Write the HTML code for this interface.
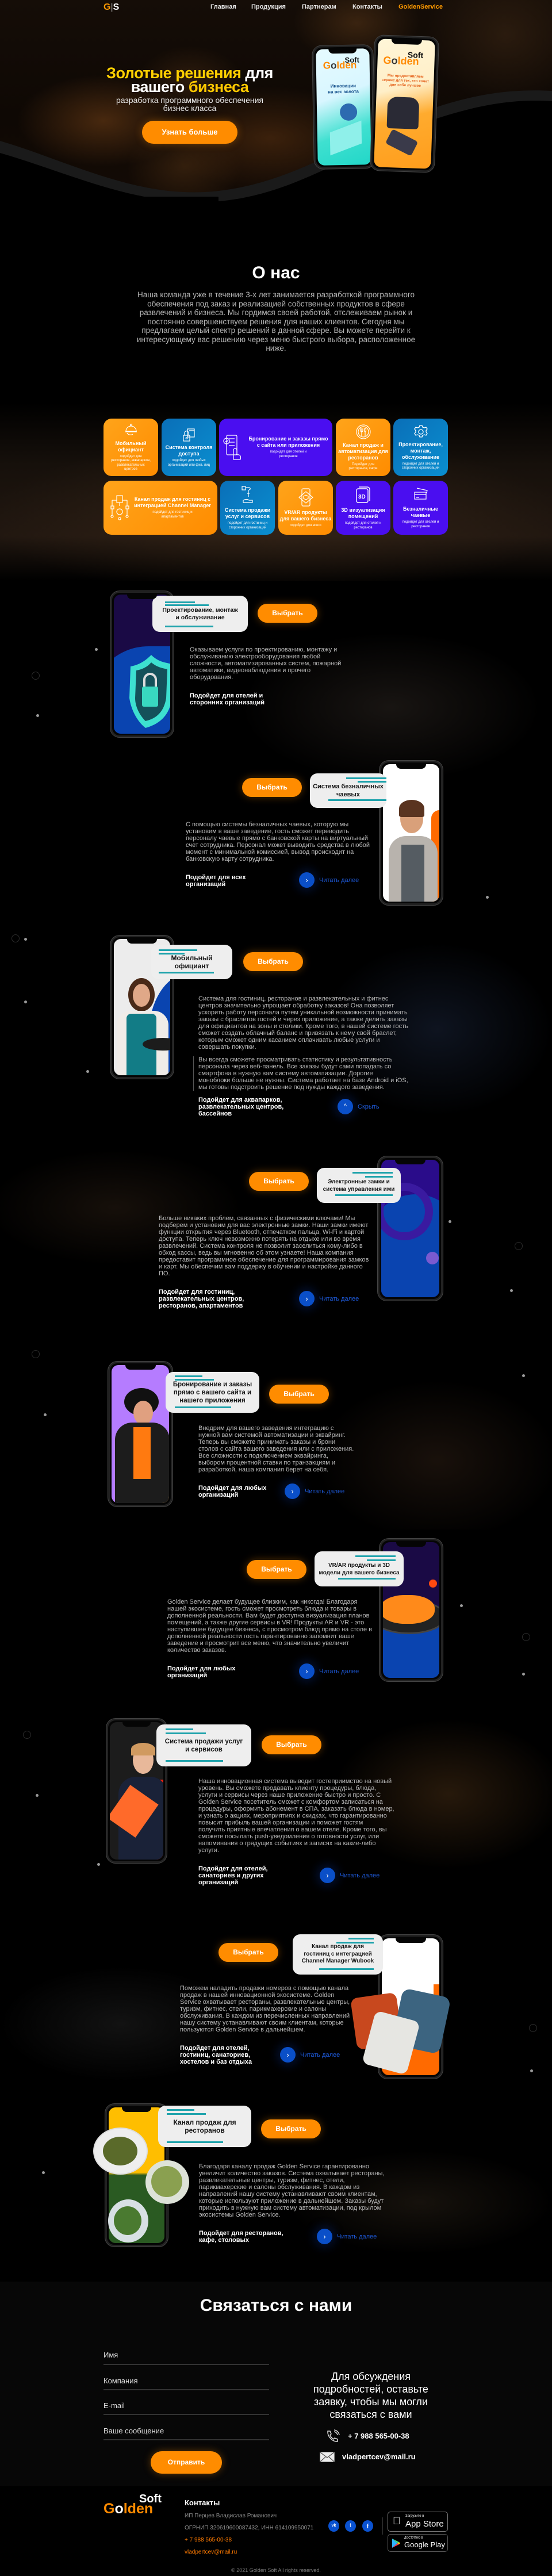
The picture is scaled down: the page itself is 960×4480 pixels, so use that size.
<!DOCTYPE html>
<html><head><meta charset="utf-8">
<style>
*{margin:0;padding:0;box-sizing:border-box}
body{width:960px;height:4480px;background:#000;font-family:"Liberation Sans",Arial,sans-serif;overflow:hidden}
#w{position:relative;width:960px;height:4480px;overflow:hidden;background:#000}
.a{position:absolute}
.nav{position:absolute;top:6px;font-size:11px;font-weight:bold;color:#e8e8e8}
.txt{position:absolute;font-size:11px;line-height:12px;color:#b9b9b9;white-space:nowrap}
.fit{position:absolute;font-size:11px;line-height:12px;color:#fff;font-weight:bold;white-space:nowrap}
.btn{position:absolute;width:104px;height:33px;border-radius:17px;background:#ff8c00;color:#fff;font-weight:bold;font-size:12px;line-height:33px;text-align:center;box-shadow:0 0 14px rgba(255,140,0,.35)}
.bub{position:absolute;background:#eeeeee;border-radius:13px;color:#151515;font-weight:bold;font-size:10.5px;line-height:13px;text-align:center;display:flex;align-items:center;justify-content:center;flex-direction:column;white-space:nowrap}
.bub .l1,.bub .l2,.bub .l3{position:absolute;height:3px;background:#1fa3ac}
.more{position:absolute;width:27px;height:27px;border-radius:50%;background:#0a4fc8;box-shadow:0 0 16px 6px rgba(10,60,180,.25);color:#fff;font-size:13px;line-height:27px;text-align:center}
.mt{position:absolute;color:#1d58d6;font-size:11px;white-space:nowrap}
.ph{position:absolute;border:3px solid #222;border-radius:16px;background:#050505;box-shadow:0 0 0 1px #444}
.scr{position:absolute;left:3px;top:3px;right:3px;bottom:3px;border-radius:12px;overflow:hidden}
.notch{position:absolute;left:50%;top:0;width:50%;height:11px;margin-left:-25%;background:#050505;border-radius:0 0 8px 8px;z-index:3}
.tile{position:absolute;border-radius:14px;color:#fff;text-align:center;display:flex;flex-direction:column;align-items:center;justify-content:center;padding:3px;white-space:nowrap}
.tile b{font-size:9px;line-height:11px;display:block}
.tile i{font-style:normal;font-size:6px;line-height:7.5px;display:block;margin-top:3px;color:#fff}
.o{background:linear-gradient(135deg,#ffa41a,#ff8c00)}
.bl{background:linear-gradient(135deg,#0a6fb8,#0a8fd0)}
.pu{background:#4a0ef0}
.dot{position:absolute;width:5px;height:5px;border-radius:50%;background:#9a9a9a}
.ring{position:absolute;width:14px;height:14px;border-radius:50%;border:1px solid #2a2a2a}
.lbl{position:absolute;left:180px;color:#ddd;font-size:13px}
.ul{position:absolute;left:180px;width:288px;height:2px;background:#333}
</style></head><body><div id="w">

<!-- HERO -->
<div class="a" style="left:0;top:0;width:960px;height:345px;background:
radial-gradient(ellipse 150px 80px at 180px 210px,rgba(110,62,22,.6),transparent),
radial-gradient(ellipse 190px 90px at 470px 240px,rgba(95,52,18,.55),transparent),
radial-gradient(ellipse 110px 70px at 620px 40px,rgba(95,58,25,.5),transparent),
radial-gradient(ellipse 90px 60px at 330px 140px,rgba(75,45,20,.5),transparent),
radial-gradient(ellipse 140px 120px at 880px 60px,rgba(65,42,22,.5),transparent),
radial-gradient(ellipse 100px 70px at 320px 290px,rgba(90,55,22,.45),transparent),
linear-gradient(180deg,#150d07,#0e0804 60%,#140b05)"></div>
<svg class="a" style="left:0;top:150px" width="960" height="220" viewBox="0 150 960 220">
<path d="M0 258 C120 290 240 360 380 345 C520 330 620 250 760 200 C840 172 900 165 960 170 L960 370 L0 370 Z" fill="#000"/>
<path d="M0 245 C120 280 240 348 380 332 C520 316 620 236 760 186 C840 160 900 155 960 158 L960 176 C900 172 840 180 760 206 C620 256 520 338 380 350 C240 362 120 300 0 266 Z" fill="#1a1a1a"/>
</svg>
<div class="a" style="left:0;top:342px;width:380px;height:30px;background:#000"></div>

<div class="a" style="left:180px;top:4px;font-weight:bold;font-size:16px;line-height:18px;color:#ff9800">G<span style="color:#aaa;font-weight:normal">|</span><span style="color:#fff">S</span></div>
<div class="nav" style="left:366px">Главная</div>
<div class="nav" style="left:437px">Продукция</div>
<div class="nav" style="left:525px">Партнерам</div>
<div class="nav" style="left:613px">Контакты</div>
<div class="nav" style="left:693px;color:#ff9a00">GoldenService</div>

<div class="a" style="left:150px;top:115px;width:360px;text-align:center;font-size:27px;line-height:24px;font-weight:bold;color:#fff;letter-spacing:-.5px"><span style="color:#ffd000">Золотые решения</span> для<br>вашего <span style="color:#ffc800">бизнеса</span></div>
<div class="a" style="left:150px;top:167px;width:360px;text-align:center;font-size:14px;line-height:14px;color:#eee">разработка программного обеспечения<br>бизнес класса</div>
<div class="btn" style="left:247px;top:210px;width:166px;height:40px;border-radius:20px;line-height:40px;font-size:13px">Узнать больше</div>

<div class="ph" style="left:545px;top:79px;width:105px;height:214px;transform:rotate(-1deg)"><div class="notch"></div><div class="scr" style="background:linear-gradient(160deg,#e6fbff 0%,#d8f6ff 40%,#3fe0d0 70%,#22d7c8)">
<div class="a" style="left:12px;top:22px;font-weight:bold;font-size:17px;line-height:13px;color:#ff8a00">G<span style="color:#333">o</span>lden</div>
<div class="a" style="left:50px;top:12px;font-weight:bold;font-size:13px;color:#111">Soft</div>
<div class="a" style="left:0;width:100%;top:60px;text-align:center;font-weight:bold;font-size:8px;line-height:10px;color:#124e8a">Инновации<br>на вес золота</div>
<div class="a" style="left:40px;top:95px;width:30px;height:30px;border-radius:50%;background:#2d6bb0"></div>
<div class="a" style="left:22px;top:135px;width:55px;height:40px;background:#8ff0ea;transform:skewY(-20deg)"></div>
</div></div>
<div class="ph" style="left:648px;top:63px;width:111px;height:235px;transform:rotate(2deg)"><div class="notch"></div><div class="scr" style="background:linear-gradient(165deg,#fff6d8 0%,#ffefc8 38%,#ffab2e 60%,#ff9d1c)">
<div class="a" style="left:10px;top:30px;font-weight:bold;font-size:18px;line-height:14px;color:#ff8a00">G<span style="color:#333">o</span>lden</div>
<div class="a" style="left:52px;top:18px;font-weight:bold;font-size:14px;color:#111">Soft</div>
<div class="a" style="left:0;width:100%;top:60px;text-align:center;font-weight:bold;font-size:6.5px;line-height:8px;color:#e5611a">Мы предоставляем<br>сервис для тех, кто хочет<br>для себя лучшее</div>
<div class="a" style="left:20px;top:100px;width:55px;height:55px;background:#2a2a35;border-radius:30% 30% 10% 10%"></div>
<div class="a" style="left:22px;top:165px;width:50px;height:28px;background:#3a3a4a;border-radius:5px;transform:rotate(25deg)"></div>
</div></div>

<!-- ABOUT -->
<div class="a" style="left:0;top:458px;width:960px;text-align:center;font-size:30px;font-weight:bold;color:#fff">О нас</div>
<div class="a" style="left:0;top:505px;width:960px;text-align:center;font-size:13.5px;line-height:15.5px;color:#b5b5b5;white-space:nowrap">Наша команда уже в течение 3-х лет занимается разработкой программного<br>обеспечения под заказ и реализацией собственных продуктов в сфере<br>развлечений и бизнеса. Мы гордимся своей работой, отслеживаем рынок и<br>постоянно совершенствуем решения для наших клиентов. Сегодня мы<br>предлагаем целый спектр решений в данной сфере. Вы можете перейти к<br>интересующему вас решению через меню быстрого выбора, расположенное<br>ниже.</div>

<!-- tiles bg -->
<div class="a" style="left:0;top:700px;width:960px;height:310px;background:radial-gradient(ellipse 500px 140px at 480px 200px,rgba(70,48,30,.5),transparent),linear-gradient(180deg,#000,#16100b 35%,#211710 75%,#000)"></div>

<div class="tile o" style="left:180px;top:728px;width:95px;height:100px"><svg width="26" height="26" viewBox="0 0 26 26" fill="none" stroke="#fff" stroke-width="1.2"><circle cx="13" cy="3" r="1.5"/><path d="M4 14a9 9 0 0 1 18 0zM3 15h20M6 17c2 4 8 4 10 2"/></svg><b style="margin-top:4px">Мобильный<br>официант</b><i>подойдет для<br>ресторанов, аквапарков,<br>развлекательных<br>центров</i></div>
<div class="tile bl" style="left:281px;top:728px;width:95px;height:100px"><svg width="26" height="26" viewBox="0 0 26 26" fill="none" stroke="#fff" stroke-width="1.2"><path d="M10 3h12v14H10zM13 6h9M3 14h11v10H3zM5 14v-4a3.5 3.5 0 0 1 7 0v4"/><circle cx="8.5" cy="19" r="1.3"/></svg><b style="margin-top:4px">Система контроля<br>доступа</b><i>подойдет для любых<br>организаций или физ. лиц</i></div>
<div class="tile pu" style="left:381px;top:728px;width:197px;height:100px;flex-direction:row"><svg width="36" height="50" viewBox="0 0 36 50" fill="none" stroke="#fff" stroke-width="1.2"><rect x="6" y="4" width="18" height="34" rx="2"/><circle cx="6" cy="14" r="5"/><path d="M4 14l2 2 3-4M10 10h10M10 16h10M10 22h10M18 30c0-4 6-4 6 0v8c4-1 8 1 6 8H18z"/></svg><div style="margin-left:8px"><b>Бронирование и заказы прямо<br>с сайта или приложения</b><i>подойдет для отелей и<br>ресторанов</i></div></div>
<div class="tile o" style="left:584px;top:728px;width:95px;height:100px"><svg width="28" height="28" viewBox="0 0 28 28" fill="none" stroke="#fff" stroke-width="1.2"><circle cx="14" cy="14" r="12"/><circle cx="14" cy="14" r="9"/><path d="M11 8v5M9 8v4a2 2 0 0 0 4 0V8M11 13v8M17 8c-2 0-2 6 0 6s2-6 0-6zM17 14v7"/></svg><b style="margin-top:4px">Канал продаж и<br>автоматизация для<br>ресторанов</b><i>Подойдет для<br>ресторанов, кафе</i></div>
<div class="tile bl" style="left:684px;top:728px;width:95px;height:100px"><svg width="26" height="26" viewBox="0 0 26 26" fill="none" stroke="#fff" stroke-width="1.3"><circle cx="13" cy="13" r="4"/><path d="M11 2h4l1 3 3 1 3-1 2 3-2 3v2l2 3-2 3-3-1-3 1-1 3h-4l-1-3-3-1-3 1-2-3 2-3v-2L2 8l2-3 3 1 3-1z"/></svg><b style="margin-top:4px">Проектирование,<br>монтаж,<br>обслуживание</b><i>подойдет для отелей и<br>сторонних организаций</i></div>

<div class="tile o" style="left:180px;top:836px;width:198px;height:94px;flex-direction:row"><svg width="36" height="50" viewBox="0 0 36 50" fill="none" stroke="#fff" stroke-width="1.2"><rect x="12" y="4" width="10" height="12"/><path d="M17 16v6M4 12h8M22 12h8M4 12v10M30 12v10M2 22h5v5H2zM28 22h5v5h-5zM4 27v10M30 27v10"/><circle cx="17" cy="32" r="5"/><circle cx="4" cy="40" r="2"/><circle cx="30" cy="40" r="2"/><circle cx="17" cy="44" r="2"/></svg><div style="margin-left:6px"><b>Канал продаж для гостиниц с<br>интеграцией Channel Manager</b><i>подойдет для гостиниц и<br>апартаментов</i></div></div>
<div class="tile bl" style="left:383px;top:836px;width:95px;height:94px"><svg width="26" height="34" viewBox="0 0 26 34" fill="none" stroke="#fff" stroke-width="1.2"><path d="M3 2h6v6H3zM9 4h6c3 0 3 4 0 4M14 8v12M12 14h4M5 26c4-2 8-2 10 0h6v4H5z"/></svg><b style="margin-top:4px">Система продажи<br>услуг и сервисов</b><i>подойдет для гостиниц и<br>сторонних организаций</i></div>
<div class="tile o" style="left:484px;top:836px;width:95px;height:94px"><svg width="28" height="34" viewBox="0 0 28 34" fill="none" stroke="#fff" stroke-width="1.2"><rect x="7" y="2" width="14" height="30" rx="2"/><path d="M2 17l12-10 12 10-12 10z"/><path d="M10 15l4-2 4 2v4l-4 2-4-2z"/></svg><b style="margin-top:4px">VR/AR продукты<br>для вашего бизнеса</b><i>подойдет для всего</i></div>
<div class="tile pu" style="left:584px;top:836px;width:95px;height:94px"><svg width="28" height="34" viewBox="0 0 28 34" fill="none" stroke="#fff" stroke-width="1.4"><rect x="2" y="6" width="20" height="24" rx="3"/><path d="M6 3h15a4 4 0 0 1 4 4v20"/><text x="5" y="23" font-size="10" fill="#fff" stroke="none" font-family="Liberation Sans" font-weight="bold">3D</text></svg><b style="margin-top:4px">3D визуализация<br>помещений</b><i>подойдет для отелей и<br>ресторанов</i></div>
<div class="tile pu" style="left:684px;top:836px;width:95px;height:94px"><svg width="30" height="30" viewBox="0 0 30 30" fill="none" stroke="#fff" stroke-width="1.2"><path d="M8 3l18 4-1 4M4 10h20v12H4zM4 14h20M7 19h5"/></svg><b style="margin-top:4px">Безналичные<br>чаевые</b><i>подойдет для отелей и<br>ресторанов</i></div>

<!-- faint section backgrounds -->
<div class="a" style="left:420px;top:1100px;width:520px;height:260px;background:radial-gradient(ellipse 260px 130px at 260px 130px,rgba(40,34,30,.6),transparent)"></div>
<div class="a" style="left:560px;top:1640px;width:400px;height:300px;background:radial-gradient(ellipse 200px 150px at 200px 150px,rgba(20,28,45,.7),transparent)"></div>
<div class="a" style="left:0;top:2000px;width:450px;height:200px;background:radial-gradient(ellipse 220px 100px at 200px 100px,rgba(40,28,18,.55),transparent)"></div>
<div class="a" style="left:540px;top:2380px;width:420px;height:280px;background:radial-gradient(ellipse 210px 140px at 220px 160px,rgba(45,30,20,.55),transparent)"></div>
<div class="a" style="left:560px;top:2990px;width:400px;height:260px;background:radial-gradient(ellipse 200px 130px at 220px 130px,rgba(70,45,20,.55),transparent)"></div>
<div class="a" style="left:0;top:3420px;width:420px;height:200px;background:radial-gradient(ellipse 210px 100px at 210px 100px,rgba(30,30,30,.6),transparent)"></div>
<div class="a" style="left:500px;top:3740px;width:460px;height:180px;background:radial-gradient(ellipse 230px 90px at 230px 90px,rgba(40,32,22,.55),transparent)"></div>

<!-- dots -->
<div class="dot" style="left:165px;top:1127px"></div><div class="dot" style="left:63px;top:1242px"></div><div class="dot" style="left:845px;top:1558px"></div><div class="dot" style="left:42px;top:1631px"></div><div class="dot" style="left:42px;top:1740px"></div><div class="dot" style="left:150px;top:1861px"></div><div class="dot" style="left:780px;top:2122px"></div><div class="dot" style="left:887px;top:2242px"></div><div class="dot" style="left:76px;top:2458px"></div><div class="dot" style="left:908px;top:2390px"></div><div class="dot" style="left:800px;top:2790px"></div><div class="dot" style="left:908px;top:2909px"></div><div class="dot" style="left:62px;top:3120px"></div><div class="dot" style="left:169px;top:3240px"></div><div class="dot" style="left:922px;top:3599px"></div><div class="dot" style="left:73px;top:3776px"></div>
<div class="ring" style="left:55px;top:1168px"></div><div class="ring" style="left:20px;top:1625px"></div><div class="ring" style="left:895px;top:2160px"></div><div class="ring" style="left:55px;top:2348px"></div><div class="ring" style="left:908px;top:2840px"></div><div class="ring" style="left:40px;top:3010px"></div><div class="ring" style="left:920px;top:3520px"></div>

<!-- S1 -->
<div class="ph" style="left:192px;top:1028px;width:110px;height:254px"><div class="notch"></div><div class="scr" style="background:#1a0a45">
<div class="a" style="left:-40px;top:90px;width:200px;height:200px;border-radius:50% 0 0 0;background:#0a44b0"></div>
<svg class="a" style="left:25px;top:100px" width="80" height="135" viewBox="0 0 80 135"><path d="M40 5 C55 20 70 18 78 22 L76 80 C72 110 55 125 30 132 C15 120 5 100 2 80 L4 25 C20 22 30 15 40 5Z" fill="#3de0d0"/><path d="M40 18 C52 28 62 28 68 30 L66 80 C62 105 48 116 30 120 C20 110 12 95 12 80 L14 32 C26 30 34 25 40 18Z" fill="#14515a"/><rect x="24" y="60" width="28" height="35" rx="3" fill="#38d8c0"/><path d="M28 60v-12a10 10 0 0 1 20 0v12" fill="none" stroke="#ddd" stroke-width="4"/></svg>
</div></div>
<div class="bub" style="left:265px;top:1036px;width:166px;height:63px">Проектирование, монтаж<br>и обслуживание<span class="l1" style="left:22px;top:10px;width:52px"></span><span class="l2" style="left:22px;top:15px;width:76px"></span><span class="l3" style="left:22px;top:52px;width:84px"></span></div>
<div class="btn" style="left:448px;top:1050px">Выбрать</div>
<div class="txt" style="left:330px;top:1124px">Оказываем услуги по проектированию, монтажу и<br>обслуживанию электрооборудования любой<br>сложности, автоматизированных систем, пожарной<br>автоматики, видеонаблюдения и прочего<br>оборудования.</div>
<div class="fit" style="left:330px;top:1204px">Подойдет для отелей и<br>сторонних организаций</div>

<!-- S2 -->
<div class="ph" style="left:660px;top:1323px;width:110px;height:251px"><div class="notch"></div><div class="scr" style="background:#fff">
<div class="a" style="right:0;top:80px;width:14px;height:160px;background:#ff6a00;border-radius:14px 0 0 0"></div>
<div class="a" style="left:30px;top:70px;width:40px;height:50px;border-radius:50%;background:#d9a07a"></div>
<div class="a" style="left:28px;top:62px;width:44px;height:30px;border-radius:50% 50% 10% 10%;background:#5a3420"></div>
<div class="a" style="left:10px;top:125px;width:85px;height:130px;border-radius:30px 30px 0 0;background:#b8b3ad"></div>
<div class="a" style="left:32px;top:140px;width:40px;height:110px;background:#555c62"></div>
</div></div>
<div class="bub" style="left:539px;top:1345px;width:133px;height:60px;font-size:11px;line-height:14px">Система безналичных<br>чаевых<span class="l1" style="left:63px;top:7px;width:70px"></span><span class="l2" style="left:83px;top:13px;width:50px"></span><span class="l3" style="left:32px;top:45px;width:101px"></span></div>
<div class="btn" style="left:421px;top:1353px">Выбрать</div>
<div class="txt" style="left:323px;top:1428px">С помощью системы безналичных чаевых, которую мы<br>установим в ваше заведение, гость сможет переводить<br>персоналу чаевые прямо с банковской карты на виртуальный<br>счет сотрудника. Персонал может выводить средства в любой<br>момент с минимальной комиссией, вывод происходит на<br>банковскую карту сотрудника.</div>
<div class="fit" style="left:323px;top:1520px">Подойдет для всех<br>организаций</div>
<div class="more" style="left:520px;top:1517px">›</div><div class="mt" style="left:555px;top:1525px">Читать далее</div>

<!-- S3 -->
<div class="ph" style="left:192px;top:1627px;width:110px;height:249px"><div class="notch"></div><div class="scr" style="background:#ececec">
<div class="a" style="left:60px;top:60px;width:140px;height:220px;border-radius:50%;background:#0a44b0"></div>
<div class="a" style="left:25px;top:68px;width:46px;height:58px;border-radius:50%;background:#4a2a18"></div>
<div class="a" style="left:33px;top:78px;width:30px;height:40px;border-radius:50%;background:#e0a888"></div>
<div class="a" style="left:5px;top:125px;width:90px;height:130px;border-radius:25px 25px 0 0;background:#f0ece8"></div>
<div class="a" style="left:22px;top:130px;width:52px;height:120px;border-radius:8px 8px 0 0;background:#127c86"></div>
<div class="a" style="left:50px;top:172px;width:70px;height:22px;border-radius:50%;background:#1c1c1c"></div>
</div></div>
<div class="bub" style="left:263px;top:1643px;width:141px;height:60px;font-size:12px;line-height:14px">Мобильный<br>официант<span class="l1" style="left:13px;top:8px;width:67px"></span><span class="l2" style="left:13px;top:14px;width:45px"></span><span class="l3" style="left:13px;top:47px;width:96px"></span></div>
<div class="btn" style="left:423px;top:1656px">Выбрать</div>
<div class="txt" style="left:345px;top:1731px">Система для гостиниц, ресторанов и развлекательных и фитнес<br>центров значительно упрощает обработку заказов! Она позволяет<br>ускорить работу персонала путем уникальной возможности принимать<br>заказы с браслетов гостей и через приложение, а также делить заказы<br>для официантов на зоны и столики. Кроме того, в нашей системе гость<br>сможет создать облачный баланс и привязать к нему свой браслет,<br>которым сможет одним касанием оплачивать любые услуги и<br>совершать покупки.</div>
<div class="a" style="left:336px;top:1837px;width:1px;height:60px;background:#555"></div>
<div class="txt" style="left:345px;top:1837px">Вы всегда сможете просматривать статистику и результативность<br>персонала через веб-панель. Все заказы будут сами попадать со<br>смартфона в нужную вам систему автоматизации. Дорогие<br>моноблоки больше не нужны. Система работает на базе Android и iOS,<br>мы готовы подстроить решение под нужды каждого заведения.</div>
<div class="fit" style="left:345px;top:1907px">Подойдет для аквапарков,<br>развлекательных центров,<br>бассейнов</div>
<div class="more" style="left:587px;top:1911px;font-size:11px">^</div><div class="mt" style="left:622px;top:1919px">Скрыть</div>

<!-- S4 -->
<div class="ph" style="left:657px;top:2011px;width:113px;height:251px"><div class="notch"></div><div class="scr" style="background:#2a0c8a">
<div class="a" style="left:-30px;top:60px;width:180px;height:200px;border-radius:50%;background:#0a44b0"></div>
<div class="a" style="left:-10px;top:40px;width:100px;height:100px;border-radius:50%;border:14px solid #3a1aa0"></div>
<div class="a" style="left:78px;top:160px;width:22px;height:22px;border-radius:50%;background:#7a5ad0"></div>
</div></div>
<div class="bub" style="left:551px;top:2031px;width:146px;height:61px;font-size:10px;line-height:13px">Электронные замки и<br>система управления ими<span class="l1" style="left:62px;top:7px;width:70px"></span><span class="l2" style="left:84px;top:14px;width:48px"></span><span class="l3" style="left:32px;top:46px;width:100px"></span></div>
<div class="btn" style="left:433px;top:2038px">Выбрать</div>
<div class="txt" style="left:276px;top:2113px">Больше никаких проблем, связанных с физическими ключами! Мы<br>подберем и установим для вас электронные замки. Наши замки имеют<br>функции открытия через Bluetooth, отпечатком пальца, Wi-Fi и картой<br>доступа. Теперь ключ невозможно потерять на отдыхе или во время<br>развлечений. Система контроля не позволит заселиться кому-либо в<br>обход кассы, ведь вы мгновенно об этом узнаете! Наша компания<br>предоставит программное обеспечение для программирования замков<br>и карт. Мы обеспечим вам поддержу в обучении и настройке данного<br>ПО.</div>
<div class="fit" style="left:276px;top:2241px">Подойдет для гостиниц,<br>развлекательных центров,<br>ресторанов, апартаментов</div>
<div class="more" style="left:520px;top:2245px">›</div><div class="mt" style="left:555px;top:2253px">Читать далее</div>

<!-- S5 -->
<div class="ph" style="left:188px;top:2368px;width:112px;height:252px"><div class="notch"></div><div class="scr" style="background:#b57cff">
<div class="a" style="left:80px;top:140px;width:30px;height:110px;background:#ffbe00"></div>
<div class="a" style="left:22px;top:40px;width:60px;height:48px;border-radius:50%;background:#111"></div>
<div class="a" style="left:38px;top:62px;width:34px;height:42px;border-radius:50%;background:#e0a080"></div>
<div class="a" style="left:6px;top:100px;width:95px;height:150px;border-radius:30px 30px 0 0;background:#1c1c1c"></div>
<div class="a" style="left:38px;top:108px;width:30px;height:90px;background:#ff7a10"></div>
</div></div>
<div class="bub" style="left:288px;top:2386px;width:163px;height:71px;font-size:11.5px;line-height:14px">Бронирование и заказы<br>прямо с вашего сайта и<br>нашего приложения<span class="l1" style="left:16px;top:6px;width:48px"></span><span class="l2" style="left:16px;top:12px;width:68px"></span><span class="l3" style="left:16px;top:60px;width:98px"></span></div>
<div class="btn" style="left:468px;top:2408px">Выбрать</div>
<div class="txt" style="left:345px;top:2478px">Внедрим для вашего заведения интеграцию с<br>нужной вам системой автоматизации и эквайринг.<br>Теперь вы сможете принимать заказы и брони<br>столов с сайта вашего заведения или с приложения.<br>Все сложности с подключением эквайринга,<br>выбором процентной ставки по транзакциям и<br>разработкой, наша компания берет на себя.</div>
<div class="fit" style="left:345px;top:2582px">Подойдет для любых<br>организаций</div>
<div class="more" style="left:495px;top:2580px">›</div><div class="mt" style="left:530px;top:2588px">Читать далее</div>

<!-- S6 -->
<div class="ph" style="left:660px;top:2676px;width:110px;height:248px"><div class="notch"></div><div class="scr" style="background:linear-gradient(180deg,#1a0a45 0%,#1a0a45 45%,#0a44b0 65%,#0a44b0)">
<div class="a" style="left:-20px;top:100px;width:130px;height:60px;border-radius:50%;background:#222;border:3px solid #444"></div>
<div class="a" style="left:-5px;top:92px;width:95px;height:50px;border-radius:45%;background:#ff8a1a"></div>
<div class="a" style="left:80px;top:65px;width:14px;height:14px;border-radius:50%;background:#ff4a10"></div>
</div></div>
<div class="bub" style="left:547px;top:2698px;width:155px;height:61px;font-size:10px;line-height:13px">VR/AR продукты и 3D<br>модели для вашего бизнеса<span class="l1" style="left:71px;top:7px;width:70px"></span><span class="l2" style="left:91px;top:14px;width:50px"></span><span class="l3" style="left:41px;top:46px;width:100px"></span></div>
<div class="btn" style="left:429px;top:2713px">Выбрать</div>
<div class="txt" style="left:291px;top:2780px">Golden Service делает будущее близким, как никогда! Благодаря<br>нашей экосистеме, гость сможет просмотреть блюда и товары в<br>дополненной реальности. Вам будет доступна визуализация планов<br>помещений, а также другие сервисы в VR! Продукты AR и VR - это<br>наступившее будущее бизнеса, с просмотром блюд прямо на столе в<br>дополненной реальности гость гарантированно запомнит ваше<br>заведение и просмотрит все меню, что значительно увеличит<br>количество заказов.</div>
<div class="fit" style="left:291px;top:2896px">Подойдет для любых<br>организаций</div>
<div class="more" style="left:520px;top:2893px">›</div><div class="mt" style="left:555px;top:2901px">Читать далее</div>

<!-- S7 -->
<div class="ph" style="left:185px;top:2989px;width:105px;height:251px"><div class="notch"></div><div class="scr" style="background:#1c1c1c">
<div class="a" style="right:0;top:100px;width:14px;height:150px;background:#e82010"></div>
<div class="a" style="left:40px;top:42px;width:36px;height:48px;border-radius:50%;background:#e8b89a"></div>
<div class="a" style="left:37px;top:36px;width:42px;height:22px;border-radius:50% 50% 0 0;background:#d09a60"></div>
<div class="a" style="left:15px;top:95px;width:85px;height:160px;border-radius:30px 30px 0 0;background:#1a2238"></div>
<div class="a" style="left:10px;top:120px;width:60px;height:70px;background:#ff6a2a;transform:rotate(35deg)"></div>
</div></div>
<div class="bub" style="left:272px;top:2999px;width:165px;height:73px;font-size:11.5px;line-height:14px">Система продажи услуг<br>и сервисов<span class="l1" style="left:16px;top:7px;width:48px"></span><span class="l2" style="left:16px;top:14px;width:70px"></span><span class="l3" style="left:16px;top:62px;width:100px"></span></div>
<div class="btn" style="left:455px;top:3018px">Выбрать</div>
<div class="txt" style="left:345px;top:3092px">Наша инновационная система выводит гостеприимство на новый<br>уровень. Вы сможете продавать клиенту процедуры, блюда,<br>услуги и сервисы через наше приложение быстро и просто. С<br>Golden Service посетитель сможет с комфортом записаться на<br>процедуры, оформить абонемент в СПА, заказать блюда в номер,<br>и узнать о акциях, мероприятиях и скидках, что гарантированно<br>повысит прибыль вашей организации и поможет гостям<br>получить приятные впечатления о вашем отеле. Кроме того, вы<br>сможете посылать push-уведомления о готовности услуг, или<br>напоминания о грядущих событиях и записях на какие-либо<br>услуги.</div>
<div class="fit" style="left:345px;top:3244px">Подойдет для отелей,<br>санаториев и других<br>организаций</div>
<div class="more" style="left:556px;top:3248px">›</div><div class="mt" style="left:591px;top:3256px">Читать далее</div>

<!-- S8 -->
<div class="ph" style="left:658px;top:3365px;width:112px;height:250px"><div class="notch"></div><div class="scr" style="background:linear-gradient(180deg,#fff 0%,#fff 70%,#ff6a00 72%)">
<div class="a" style="right:0;top:80px;width:10px;height:160px;background:#ff6a00"></div>
</div></div>
<div class="a" style="left:615px;top:3470px;width:80px;height:90px;background:#c8481e;border-radius:12px;transform:rotate(-8deg)"></div>
<div class="a" style="left:690px;top:3465px;width:85px;height:100px;background:#3c6480;border-radius:14px;transform:rotate(12deg)"></div>
<div class="a" style="left:640px;top:3505px;width:80px;height:95px;background:#e6e6e2;border-radius:12px;transform:rotate(15deg)"></div>
<div class="bub" style="left:509px;top:3364px;width:157px;height:70px;font-size:10px;line-height:12.5px">Канал продаж для<br>гостиниц с интеграцией<br>Channel Manager Wubook<span class="l1" style="left:97px;top:6px;width:44px"></span><span class="l2" style="left:76px;top:13px;width:65px"></span><span class="l3" style="left:46px;top:59px;width:95px"></span></div>
<div class="btn" style="left:380px;top:3379px">Выбрать</div>
<div class="txt" style="left:313px;top:3452px">Поможем наладить продажи номеров с помощью канала<br>продаж в нашей инновационной экосистеме. Golden<br>Service охватывает рестораны, развлекательные центры,<br>туризм, фитнес, отели, парикмахерские и салоны<br>обслуживания. В каждом из перечисленных направлений<br>нашу систему устанавливают своим клиентам, которые<br>пользуются Golden Service в дальнейшем.</div>
<div class="fit" style="left:313px;top:3556px">Подойдет для отелей,<br>гостиниц, санаториев,<br>хостелов и баз отдыха</div>
<div class="more" style="left:487px;top:3560px">›</div><div class="mt" style="left:522px;top:3568px">Читать далее</div>

<!-- S9 -->
<div class="ph" style="left:183px;top:3659px;width:109px;height:248px"><div class="notch"></div><div class="scr" style="background:linear-gradient(180deg,#ffbe00 0%,#ffbe00 48%,#2a5a22 50%)"></div></div>
<div class="a" style="left:162px;top:3700px;width:95px;height:82px;border-radius:50%;background:#eee;border:2px solid #ddd"><div class="a" style="left:15px;top:14px;width:60px;height:50px;border-radius:50%;background:#5a6a2a"></div></div>
<div class="a" style="left:253px;top:3757px;width:76px;height:76px;border-radius:50%;background:#dde2d8"><div class="a" style="left:10px;top:10px;width:54px;height:54px;border-radius:50%;background:#8aa050"></div></div>
<div class="a" style="left:188px;top:3825px;width:70px;height:75px;border-radius:50%;background:#d8e0e4"><div class="a" style="left:10px;top:12px;width:48px;height:50px;border-radius:50%;background:#4a7a30"></div></div>
<div class="bub" style="left:275px;top:3662px;width:162px;height:72px;font-size:12px;line-height:14px">Канал продаж для<br>ресторанов<span class="l1" style="left:15px;top:6px;width:48px"></span><span class="l2" style="left:15px;top:13px;width:68px"></span><span class="l3" style="left:15px;top:62px;width:98px"></span></div>
<div class="btn" style="left:454px;top:3686px">Выбрать</div>
<div class="txt" style="left:346px;top:3762px">Благодаря каналу продаж Golden Service гарантированно<br>увеличит количество заказов. Система охватывает рестораны,<br>развлекательные центры, туризм, фитнес, отели,<br>парикмахерские и салоны обслуживания. В каждом из<br>направлений нашу систему устанавливают своим клиентам,<br>которые используют приложение в дальнейшем. Заказы будут<br>приходить в нужную вам систему автоматизации, под крылом<br>экосистемы Golden Service.</div>
<div class="fit" style="left:346px;top:3878px">Подойдет для ресторанов,<br>кафе, столовых</div>
<div class="more" style="left:551px;top:3876px">›</div><div class="mt" style="left:586px;top:3884px">Читать далее</div>

<!-- CONTACT -->
<div class="a" style="left:0;top:3968px;width:960px;height:355px;background:#070707"></div>
<div class="a" style="left:0;top:3993px;width:960px;text-align:center;font-size:30px;font-weight:bold;color:#fff">Связаться с нами</div>
<div class="lbl" style="top:4088px">Имя</div><div class="ul" style="top:4111px"></div>
<div class="lbl" style="top:4133px">Компания</div><div class="ul" style="top:4155px"></div>
<div class="lbl" style="top:4176px">E-mail</div><div class="ul" style="top:4198px"></div>
<div class="lbl" style="top:4220px">Ваше сообщение</div><div class="ul" style="top:4242px"></div>
<div class="btn" style="left:262px;top:4263px;width:124px;height:39px;border-radius:20px;line-height:39px">Отправить</div>
<div class="a" style="left:510px;top:4122px;width:270px;text-align:center;font-size:18px;line-height:22px;color:#fff">Для обсуждения<br>подробностей, оставьте<br>заявку, чтобы мы могли<br>связаться с вами</div>
<svg class="a" style="left:566px;top:4225px" width="26" height="25" viewBox="0 0 26 25" fill="none" stroke="#ddd" stroke-width="1.5"><path d="M4 3l4 0 2 5-2 2c1 3 3 5 6 7l2-2 5 2v4c-8 1-18-8-17-18z"/><path d="M15 4a7 7 0 0 1 6 6M15 1a10 10 0 0 1 9 9"/></svg>
<div class="a" style="left:605px;top:4229px;font-size:13px;font-weight:bold;color:#fff">+ 7 988 565-00-38</div>
<svg class="a" style="left:556px;top:4264px" width="26" height="18" viewBox="0 0 26 18" fill="none" stroke="#ddd" stroke-width="1.3"><rect x="1" y="1" width="24" height="16" fill="#eee"/><path d="M1 1l12 9 12-9M1 17l9-8M25 17l-9-8" stroke="#555"/></svg>
<div class="a" style="left:595px;top:4265px;font-size:13px;font-weight:bold;color:#fff">vladpertcev@mail.ru</div>

<!-- FOOTER -->
<div class="a" style="left:180px;top:4353px;font-weight:bold;font-size:25px;line-height:20px;color:#ff8c00">G<span style="color:#fff">o</span>lden</div>
<div class="a" style="left:242px;top:4335px;font-weight:bold;font-size:20px;color:#fff">Soft</div>
<div class="a" style="left:321px;top:4345px;font-size:13px;font-weight:bold;color:#fff">Контакты</div>
<div class="a" style="left:321px;top:4370px;font-size:10px;color:#8a8a8a">ИП Перцев Владислав Романович</div>
<div class="a" style="left:321px;top:4391px;font-size:10px;color:#8a8a8a">ОГРНИП 320619600087432, ИНН 614109950071</div>
<div class="a" style="left:321px;top:4412px;font-size:10px;color:#ff7a00">+ 7 988 565-00-38</div>
<div class="a" style="left:321px;top:4433px;font-size:10px;color:#ff7a00">vladpertcev@mail.ru</div>
<div class="a" style="left:571px;top:4383px;width:19px;height:20px;border-radius:50%;background:#0a52d0;color:#fff;font-size:7px;font-weight:bold;line-height:20px;text-align:center">vk</div>
<div class="a" style="left:600px;top:4383px;width:19px;height:20px;border-radius:50%;background:#0a52d0;color:#fff;font-size:10px;line-height:20px;text-align:center">t</div>
<div class="a" style="left:630px;top:4383px;width:19px;height:20px;border-radius:50%;background:#0a52d0;color:#fff;font-size:11px;font-weight:bold;line-height:22px;text-align:center">f</div>
<div class="a" style="left:665px;top:4378px;width:1px;height:30px;background:#333"></div>
<div class="a" style="left:674px;top:4368px;width:105px;height:35px;border:1px solid #777;border-radius:5px;background:#000;color:#fff;white-space:nowrap"><span class="a" style="left:8px;top:5px;font-size:18px">&#63743;</span><span class="a" style="left:30px;top:4px;font-size:6px">Загрузите в</span><span class="a" style="left:30px;top:12px;font-size:15px">App Store</span></div>
<div class="a" style="left:674px;top:4407px;width:105px;height:31px;border:1px solid #555;border-radius:5px;background:#000;color:#fff;white-space:nowrap"><svg class="a" style="left:6px;top:6px" width="16" height="18" viewBox="0 0 16 18"><path d="M1 1l9 8-9 8z" fill="#2fb4ff"/><path d="M1 1l12 6-3 2z" fill="#3ddc84"/><path d="M1 17l12-6-3-2z" fill="#ff3b4a"/><path d="M13 7l2 2-2 2-3-2z" fill="#ffcb00"/></svg><span class="a" style="left:28px;top:3px;font-size:5px">ДОСТУПНО В</span><span class="a" style="left:28px;top:10px;font-size:13px">Google Play</span></div>
<div class="a" style="left:0;top:4465px;width:960px;text-align:center;font-size:9px;color:#7a7a7a">© 2021 Golden Soft All rights reserved.</div>

</div></body></html>
